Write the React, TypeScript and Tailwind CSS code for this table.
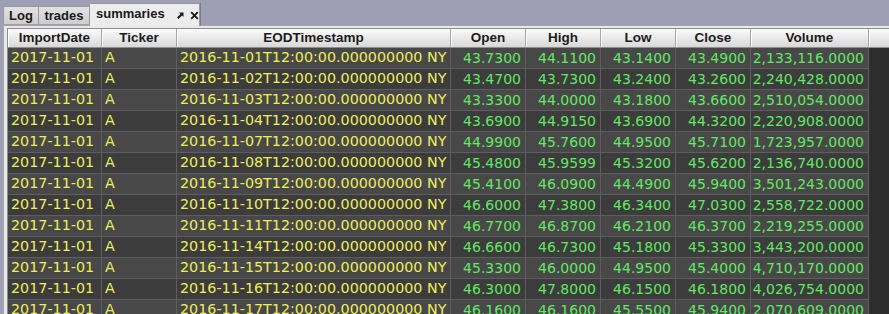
import React from "react";

const YELLOW = "text-[#eeee5c] text-[14.3px]";
const GREEN = "text-[#62e862] text-[14px]";

const COLUMNS = [
  { key: "date", title: "ImportDate", width: "w-[94px]", num: false },
  { key: "ticker", title: "Ticker", width: "w-[75px]", num: false },
  { key: "ts", title: "EODTimestamp", width: "w-[274px]", num: false },
  { key: "open", title: "Open", width: "w-[75px]", num: true },
  { key: "high", title: "High", width: "w-[75px]", num: true },
  { key: "low", title: "Low", width: "w-[75px]", num: true },
  { key: "close", title: "Close", width: "w-[75px]", num: true },
  { key: "volume", title: "Volume", width: "w-[118px]", num: true },
];

// day, open, high, low, close, volume
const ROWS: [string, string, string, string, string, string][] = [
  ["01", "43.7300", "44.1100", "43.1400", "43.4900", "2,133,116.0000"],
  ["02", "43.4700", "43.7300", "43.2400", "43.2600", "2,240,428.0000"],
  ["03", "43.3300", "44.0000", "43.1800", "43.6600", "2,510,054.0000"],
  ["04", "43.6900", "44.9150", "43.6900", "44.3200", "2,220,908.0000"],
  ["07", "44.9900", "45.7600", "44.9500", "45.7100", "1,723,957.0000"],
  ["08", "45.4800", "45.9599", "45.3200", "45.6200", "2,136,740.0000"],
  ["09", "45.4100", "46.0900", "44.4900", "45.9400", "3,501,243.0000"],
  ["10", "46.6000", "47.3800", "46.3400", "47.0300", "2,558,722.0000"],
  ["11", "46.7700", "46.8700", "46.2100", "46.3700", "2,219,255.0000"],
  ["14", "46.6600", "46.7300", "45.1800", "45.3300", "3,443,200.0000"],
  ["15", "45.3300", "46.0000", "44.9500", "45.4000", "4,710,170.0000"],
  ["16", "46.3000", "47.8000", "46.1500", "46.1800", "4,026,754.0000"],
  ["17", "46.1600", "46.1600", "45.5500", "45.9400", "2,070,609.0000"],
];

function PinIcon() {
  return (
    <svg width="9" height="9" viewBox="0 0 9 9">
      <path d="M3 1.5h4.5V6L6 4.5 2.5 8 1 6.5 4.5 3z" fill="#1a1a1a" />
    </svg>
  );
}

function CloseIcon() {
  return (
    <svg width="9" height="9" viewBox="0 0 9 9">
      <path d="M1.2 1.2l6.6 6.6M7.8 1.2L1.2 7.8" stroke="#1a1a1a" strokeWidth="1.8" />
    </svg>
  );
}

export default function App() {
  return (
    <div className="w-[889px] h-[314px] overflow-hidden bg-[#9e9fb5] flex flex-col font-['Liberation_Sans',Arial,sans-serif]">
      {/* Tab strip */}
      <div className="h-[25px] flex items-end pl-[3px] shrink-0">
        <div className="h-[18px] w-[36px] flex items-center justify-center bg-linear-to-b from-[#e2e2e2] to-[#cdcdcd] border border-b-0 border-[#9a9a9a] text-[13px] font-bold text-[#1a1a1a] mb-[1px]">
          Log
        </div>
        <div className="h-[18px] w-[51px] flex items-center justify-center bg-linear-to-b from-[#e2e2e2] to-[#cdcdcd] border border-b-0 border-l-0 border-[#9a9a9a] text-[13px] font-bold text-[#1a1a1a] mb-[1px]">
          trades
        </div>
        <div className="h-[23px] w-[110px] flex items-center pl-[6px] gap-[5px] bg-[#ececec] border border-b-0 border-l-0 border-[#9a9a9a] shadow-[1px_0_0_#7d7d90] text-[13px] font-bold text-[#1a1a1a] relative z-10 -mb-[1px]">
          <span className="pb-[2px]">summaries</span>
          <span className="ml-[6px] flex items-center gap-[5px]">
            <PinIcon />
            <CloseIcon />
          </span>
        </div>
      </div>

      {/* Panel */}
      <div className="flex-1 ml-[3px] bg-[#e9e9e9] border-t border-l border-[#a4a4a4] pl-[3px] pt-[2px] flex flex-col min-h-0">
        <div className="flex-1 border-l border-t border-[#8c8c8c] flex flex-col min-h-0">
          {/* Header */}
          <div className="flex h-[19px] shrink-0 border-b border-[#8e8e8e] bg-linear-to-b from-[#fbfbfb] to-[#d8d8d8]">
            {COLUMNS.map((c) => (
              <div
                key={c.key}
                className={`${c.width} shrink-0 h-full border-r border-[#a6a6a6] shadow-[inset_1px_0_0_#ffffff] flex items-center justify-center text-[13.5px] font-bold text-[#1c1c1c]`}
              >
                {c.title}
              </div>
            ))}
            <div className="flex-1 h-full shadow-[inset_1px_0_0_#ffffff]" />
          </div>

          {/* Body */}
          <div className="flex-1 bg-[#2d2d2d] font-['DejaVu_Sans',sans-serif]">
            {ROWS.map((r, i) => {
              const values = [
                "2017-11-01",
                "A",
                `2016-11-${r[0]}T12:00:00.000000000 NY`,
                r[1],
                r[2],
                r[3],
                r[4],
                r[5],
              ];
              const bg = i % 2 === 0 ? "bg-[#484848]" : "bg-[#3c3c3c]";
              return (
                <div key={r[0]} className="flex h-[21px]">
                  {COLUMNS.map((c, j) => (
                    <div
                      key={c.key}
                      className={`${c.width} ${bg} shrink-0 h-full border-r border-b border-[#5e5e5e] flex items-center whitespace-nowrap overflow-hidden ${
                        c.num ? `justify-end pr-[4px] ${GREEN}` : `pl-[3px] ${YELLOW}`
                      }`}
                    >
                      {values[j]}
                    </div>
                  ))}
                  <div className="flex-1" />
                </div>
              );
            })}
          </div>
        </div>
      </div>
    </div>
  );
}
